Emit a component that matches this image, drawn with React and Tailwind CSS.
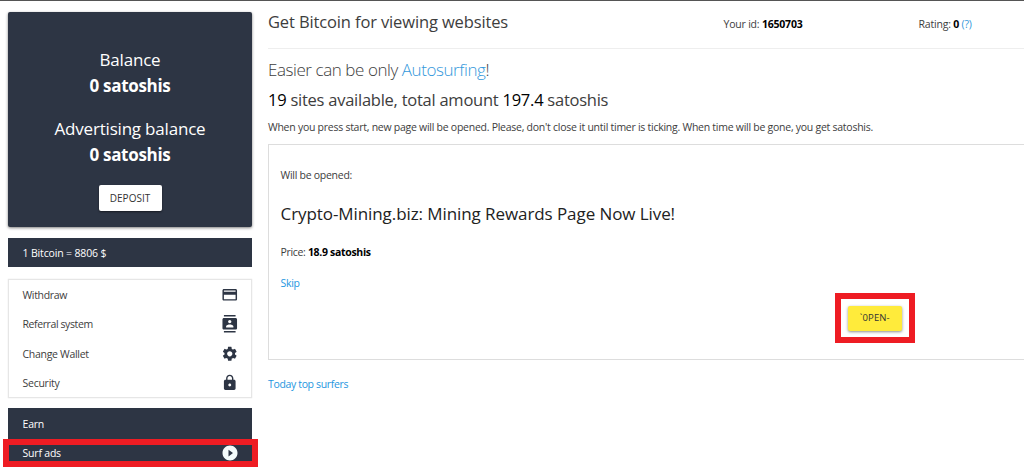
import { MdContacts, MdCreditCard, MdLock, MdPlayCircleFilled, MdSettings } from 'react-icons/md'

const ACCOUNT_LINKS = [
  { label: 'Withdraw', icon: MdCreditCard, track: 'tracking-[-0.35px]' },
  { label: 'Referral system', icon: MdContacts, track: 'tracking-[-0.4px]' },
  { label: 'Change Wallet', icon: MdSettings, track: 'tracking-[-0.3px]' },
  { label: 'Security', icon: MdLock, track: 'tracking-[-0.25px]' },
]

export default function App() {
  return (
    <div className="h-[467px] w-[1024px] overflow-hidden border-t border-[#555] bg-white font-['Open_Sans','Noto_Sans',sans-serif] text-[10.5px] text-[#3d3d3d]">
      <div className="flex">
        <Sidebar />
        <Surfing />
      </div>
    </div>
  )
}

function Sidebar() {
  return (
    <aside className="ml-2 w-[244px] shrink-0 pt-[11px]">
      <div className="flex h-[215px] flex-col items-center rounded-[2px] bg-[#2d3544] pt-[35px] text-[17px] leading-[26px] text-white shadow-[0_1px_3px_rgba(0,0,0,0.5)]">
        <Balance title="Balance" />
        <div className="h-[17px]" />
        <Balance title="Advertising balance" />
        <button className="mt-[17px] h-[26px] w-[63px] rounded-[2px] bg-white text-[10px] leading-[26px] text-[#333] shadow-[0_1px_2px_rgba(0,0,0,0.5)]">
          DEPOSIT
        </button>
      </div>

      <div className="mt-[11px] h-[29px] bg-[#2d3544] pl-[14.5px] leading-[30px] tracking-[-0.15px] text-white">
        1 Bitcoin = 8806 $
      </div>

      <nav className="mt-[12px] h-[119px] border border-[#e6e6e6] pr-[13px] pl-[13.5px] shadow-[0_0_1px_#ddd]">
        {ACCOUNT_LINKS.map(({ label, icon: Icon, track }) => (
          <a key={label} className="flex h-[29.4px] items-center justify-between">
            <span className={`pt-[2px] ${track}`}>{label}</span>
            <Icon className="size-[17.5px] text-[#2d3544]" />
          </a>
        ))}
      </nav>

      <nav className="relative mt-[10px] h-[59px] bg-[#2d3544] tracking-[-0.2px] text-white">
        <div className="h-[31px] pl-[14.5px] leading-[33px]">Earn</div>
        <a className="flex h-[28px] items-center justify-between pr-[13px] pl-[14.5px]">
          <span className="pt-[2px]">Surf ads</span>
          <MdPlayCircleFilled className="size-[18px] text-[#f4fbfb]" />
        </a>
        <div className="absolute top-[31px] left-[-5px] h-[28px] w-[255px] border-6 border-[#ee1c23]" />
      </nav>
    </aside>
  )
}

function Balance({ title }) {
  return (
    <div className="text-center">
      <div className="tracking-[-0.2px]">{title}</div>
      <div className="font-bold tracking-[-0.3px]">0 satoshis</div>
    </div>
  )
}

function Surfing() {
  return (
    <main className="ml-4 min-w-0 flex-1">
      <header className="flex h-[48px] items-center border-b border-[#eee] tracking-[-0.2px]">
        <h1 className="w-[455.5px] pb-[5px] text-[16.5px] tracking-[-0.13px]">Get Bitcoin for viewing websites</h1>
        <div className="w-[195px] pt-px">
          Your id: <b className="text-black">1650703</b>
        </div>
        <div className="pt-px">
          Rating: <b className="text-black">0</b> <a className="text-[#3498db]">(?)</a>
        </div>
      </header>

      <h2 className="mt-[6px] text-[17px] leading-[30px] font-light tracking-[-0.43px]">
        Easier can be only <a className="text-[#3498db]">Autosurfing</a>!
      </h2>
      <h2 className="text-[16.5px] leading-[30px] tracking-[-0.25px]">
        <span className="font-medium text-black">19</span> sites available, total amount{' '}
        <span className="font-medium text-black">197.4</span> satoshis
      </h2>
      <p className="mt-[2px] h-[27px] leading-[20px] tracking-[-0.26px] whitespace-nowrap">
        When you press start, new page will be opened. Please, don't close it until timer is ticking. When time will be gone, you get satoshis.
      </p>

      <section className="h-[216px] border-y border-l border-[#ddd] pl-[11.5px] tracking-[-0.27px]">
        <p className="mt-[20px] leading-[20px]">Will be opened:</p>
        <h3 className="mt-[14px] text-[17px] leading-[30px] tracking-[-0.08px] text-[#222]">Crypto-Mining.biz: Mining Rewards Page Now Live!</h3>
        <p className="mt-[13px] leading-[20px] tracking-[-0.32px]">
          Price: <b className="text-black">18.9 satoshis</b>
        </p>
        <a className="mt-[11px] block leading-[20px] text-[#1e96e0]">Skip</a>
        <div className="ml-[554.5px] flex h-[50px] w-[79.5px] items-center justify-center border-6 border-[#ee1c23]">
          <button className="h-[25px] w-[54px] rounded-[2px] bg-[#ffeb3b] text-[9.5px] tracking-[0.1px] text-[#333] shadow-[0_1px_3px_rgba(0,0,0,0.45)]">
            `0PEN-
          </button>
        </div>
      </section>

      <a className="mt-[14px] block leading-[20px] tracking-[-0.35px] text-[#1e96e0]">Today top surfers</a>
    </main>
  )
}
